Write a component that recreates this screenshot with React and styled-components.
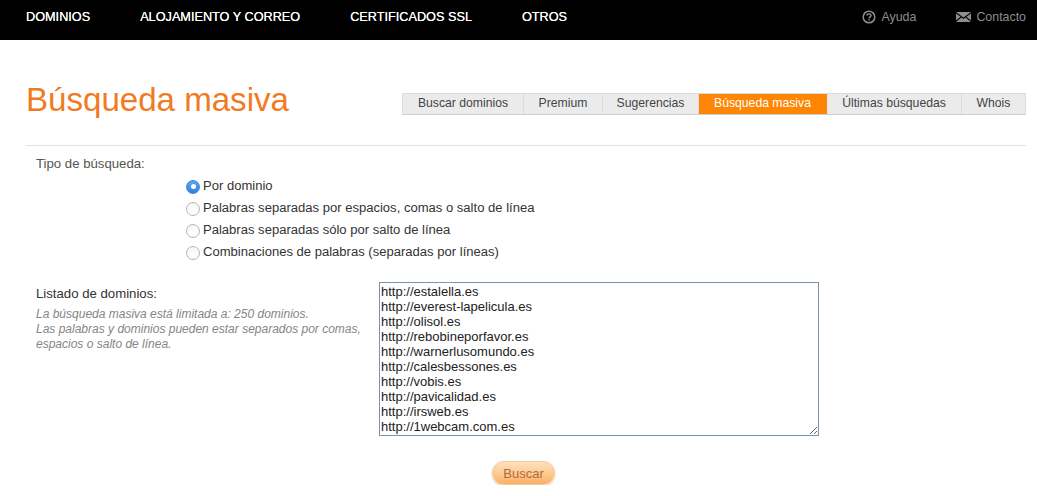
import styled, { createGlobalStyle } from "styled-components";

const GlobalStyle = createGlobalStyle`
  html, body {
    margin: 0;
    padding: 0;
    background: #fff;
    overflow: hidden;
  }
  body {
    font-family: "Liberation Sans", Arial, sans-serif;
    color: #333;
  }
`;

const TopBar = styled.header`
  height: 40px;
  background: #000;
  display: flex;
  align-items: center;
  justify-content: space-between;
  padding: 0 11px 7px 26px;
  box-sizing: border-box;
`;

const MainNav = styled.nav`
  display: flex;
  gap: 50px;
`;

const MainLink = styled.a`
  color: #fff;
  font-size: 12.7px;
  text-shadow: 0 0 0.4px #fff;
`;

const HelpNav = styled.nav`
  display: flex;
  gap: 40px;
`;

const HelpLink = styled.a`
  display: flex;
  align-items: center;
  gap: 5px;
  color: #8e8e8e;
  font-size: 12.4px;
`;

const Page = styled.main`
  padding: 0 11px 0 26px;
`;

const Heading = styled.div`
  height: 105px;
  display: flex;
  align-items: flex-start;
  justify-content: space-between;
  border-bottom: 1px solid #e2e2e2;
`;

const Title = styled.h1`
  margin: 37px 0 0;
  font-size: 33.1px;
  line-height: 46px;
  font-weight: 400;
  color: #f17a22;
`;

const Tabs = styled.div`
  margin-top: 53px;
  display: flex;
  border: 1px solid #dcdcdc;
  border-bottom-color: #cfcfcf;
  background: #ebebeb;
`;

const Tab = styled.a`
  width: ${(p) => p.$w}px;
  height: 20px;
  line-height: 19px;
  box-sizing: border-box;
  text-align: center;
  font-size: 12.2px;
  color: ${(p) => (p.$active ? "#fff" : "#444")};
  background: ${(p) => (p.$active ? "#ff8605" : "transparent")};
  border-right: 1px solid ${(p) => (p.$active ? "#ff8605" : "#dcdcdc")};
  &:last-child {
    border-right: 0;
  }
`;

const TypeSection = styled.section`
  display: grid;
  grid-template-columns: 150px 1fr;
  padding: 10px 0 0 10px;
  height: 136px;
  box-sizing: border-box;
`;

const FieldLabel = styled.div`
  font-size: 13.2px;
  line-height: 16px;
  color: ${(p) => p.$color || "#555"};
`;

const RadioList = styled.div`
  display: flex;
  flex-direction: column;
  padding-top: 18px;
`;

const RadioRow = styled.label`
  height: 22px;
  display: flex;
  align-items: center;
  gap: 3px;
  font-size: 13.05px;
  color: #333;
`;

const RadioDot = styled.span`
  width: 14px;
  height: 14px;
  box-sizing: border-box;
  border-radius: 50%;
  margin-top: 3px;
  flex: none;
  display: flex;
  align-items: center;
  justify-content: center;
  border: 1px solid ${(p) => (p.$on ? "#3f86e0" : "#b4b4b4")};
  background: ${(p) => (p.$on ? "linear-gradient(#5fa5f2, #2f7fe0)" : "linear-gradient(#f7f7f7, #fff)")};
  &::after {
    content: "";
    display: ${(p) => (p.$on ? "block" : "none")};
    width: 5px;
    height: 5px;
    border-radius: 50%;
    background: #fff;
  }
`;

const ListSection = styled.section`
  display: grid;
  grid-template-columns: 343px 440px;
  padding-left: 10px;
`;

const ListInfo = styled.div`
  padding-top: 4px;
`;

const Hint = styled.p`
  margin: 5px 0 0;
  font-size: 12px;
  line-height: 15px;
  font-style: italic;
  color: #858585;
`;

const Domains = styled.textarea`
  width: 440px;
  height: 154px;
  box-sizing: border-box;
  margin: 0;
  padding: 1px;
  border: 1px solid #7d93ad;
  border-radius: 0;
  outline: none;
  overflow: hidden;
  font-family: "Liberation Sans", Arial, sans-serif;
  font-size: 13px;
  line-height: 15px;
  color: #222;
  background: #fff;
`;

const Actions = styled.div`
  display: flex;
  padding: 25px 0 0 466px;
`;

const SearchButton = styled.button`
  width: 63px;
  height: 24px;
  padding: 0;
  border: 1px solid #f3c89a;
  border-radius: 12px;
  background: linear-gradient(#fde0bd, #fdc88c 60%, #fbae62);
  box-shadow: 0 1px 2px rgba(230, 140, 50, 0.55);
  font-family: "Liberation Sans", Arial, sans-serif;
  font-size: 13px;
  color: #b5683a;
`;

const tabs = [
  ["Buscar dominios", 121],
  ["Premium", 79],
  ["Sugerencias", 96],
  ["Búsqueda masiva", 128, true],
  ["Últimas búsquedas", 135],
  ["Whois", 63],
];

const options = [
  "Por dominio",
  "Palabras separadas por espacios, comas o salto de línea",
  "Palabras separadas sólo por salto de línea",
  "Combinaciones de palabras (separadas por líneas)",
];

const domains = [
  "http://estalella.es",
  "http://everest-lapelicula.es",
  "http://olisol.es",
  "http://rebobineporfavor.es",
  "http://warnerlusomundo.es",
  "http://calesbessones.es",
  "http://vobis.es",
  "http://pavicalidad.es",
  "http://irsweb.es",
  "http://1webcam.com.es",
].join("\n");

const HelpIcon = () => (
  <svg width="14" height="14" viewBox="0 0 14 14" fill="none" stroke="#8e8e8e">
    <circle cx="7" cy="7" r="5.8" strokeWidth="1.5" />
    <path d="M5 5.6C5 4.4 5.9 3.9 7 3.9s2 .6 2 1.6c0 1.4-2 1.4-2 2.9" strokeWidth="1.4" />
    <path d="M7 9.2v1.4" strokeWidth="1.4" />
  </svg>
);

const MailIcon = () => (
  <svg width="15" height="10" viewBox="0 0 15 10" fill="#8e8e8e">
    <path d="M0 0h15L7.5 5.5z" />
    <path d="M0 1.4 4.6 4.8 0 8.6zM15 1.4 10.4 4.8 15 8.6z" />
    <path d="M0 10 5.4 5.5l2.1 1.5 2.1-1.5L15 10z" />
  </svg>
);

export default function App() {
  return (
    <>
      <GlobalStyle />
      <TopBar>
        <MainNav>
          <MainLink>DOMINIOS</MainLink>
          <MainLink>ALOJAMIENTO Y CORREO</MainLink>
          <MainLink>CERTIFICADOS SSL</MainLink>
          <MainLink>OTROS</MainLink>
        </MainNav>
        <HelpNav>
          <HelpLink>
            <HelpIcon />
            Ayuda
          </HelpLink>
          <HelpLink>
            <MailIcon />
            Contacto
          </HelpLink>
        </HelpNav>
      </TopBar>
      <Page>
        <Heading>
          <Title>Búsqueda masiva</Title>
          <Tabs>
            {tabs.map(([label, w, active]) => (
              <Tab key={label} $w={w} $active={active}>
                {label}
              </Tab>
            ))}
          </Tabs>
        </Heading>
        <TypeSection>
          <FieldLabel>Tipo de búsqueda:</FieldLabel>
          <RadioList>
            {options.map((text, i) => (
              <RadioRow key={text}>
                <RadioDot $on={i === 0} />
                {text}
              </RadioRow>
            ))}
          </RadioList>
        </TypeSection>
        <ListSection>
          <ListInfo>
            <FieldLabel $color="#333">Listado de dominios:</FieldLabel>
            <Hint>
              La búsqueda masiva está limitada a: 250 dominios.
              <br />
              Las palabras y dominios pueden estar separados por comas,
              <br />
              espacios o salto de línea.
            </Hint>
          </ListInfo>
          <Domains readOnly defaultValue={domains} />
        </ListSection>
        <Actions>
          <SearchButton>Buscar</SearchButton>
        </Actions>
      </Page>
    </>
  );
}
